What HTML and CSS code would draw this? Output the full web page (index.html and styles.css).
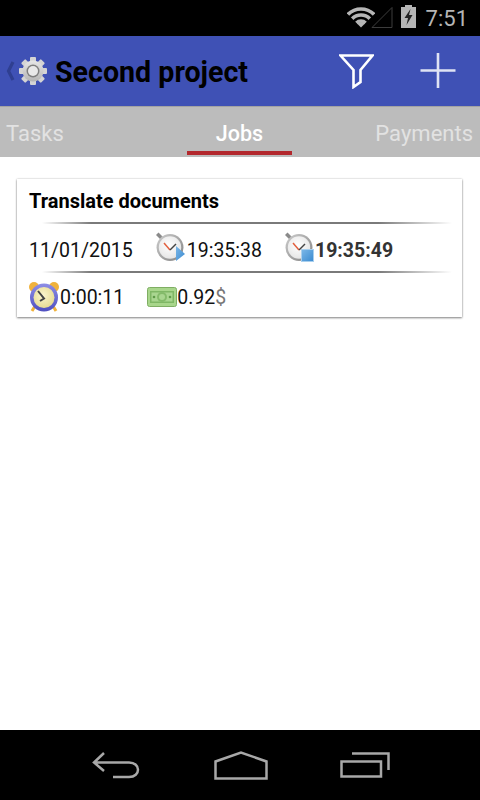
FILE: index.html
```html
<!DOCTYPE html>
<html lang="en">
<head>
<meta charset="utf-8">
<title>Second project</title>
<link rel="stylesheet" href="styles.css">
</head>
<body>
<svg class="defs" width="0" height="0" aria-hidden="true">
  <defs>
    <clipPath id="wedge"><path d="M14 20.500L-1 5.500V-1H29V5.500Z"/></clipPath>
    <radialGradient id="watchFace" cx="45%" cy="40%" r="65%"><stop offset="0" stop-color="#ffffff"/><stop offset="1" stop-color="#e4e4e4"/></radialGradient>
    <linearGradient id="watchRim" x1="0" y1="0" x2="1" y2="1"><stop offset="0" stop-color="#cfcfcf"/><stop offset="0.5" stop-color="#a6a6a6"/><stop offset="1" stop-color="#858585"/></linearGradient>
    <linearGradient id="blueBadge" x1="0" y1="0" x2="1" y2="1"><stop offset="0" stop-color="#7cb8e8"/><stop offset="1" stop-color="#3a8ad0"/></linearGradient>
    <radialGradient id="alarmFace" cx="45%" cy="40%" r="65%"><stop offset="0" stop-color="#fbf6cf"/><stop offset="1" stop-color="#e6d98f"/></radialGradient>
    <linearGradient id="alarmRim" x1="0" y1="0" x2="0" y2="1"><stop offset="0" stop-color="#8e8ee6"/><stop offset="1" stop-color="#4f4fc0"/></linearGradient>
    <linearGradient id="gearFill" x1="0" y1="0" x2="0" y2="1"><stop offset="0" stop-color="#e6e6e6"/><stop offset="1" stop-color="#b4b4b4"/></linearGradient>
  </defs>
</svg>
<div class="phone">
  <header class="status">
    <svg class="st-wifi" width="28" height="21" viewBox="0 0 28 21"><g clip-path="url(#wedge)" fill="none" stroke="#b5b5b5" stroke-width="3.600"><circle cx="14" cy="20.500" r="18.500"/><circle cx="14" cy="20.500" r="12.500"/><circle cx="14" cy="20.500" r="6.500"/></g><path d="M14 20.500L10 16.500A6 6 0 0 1 18 16.500Z" fill="#b5b5b5"/></svg>
    <svg class="st-signal" width="22" height="22" viewBox="0 0 22 22"><path d="M1 21.500L21 1.500V21.500Z" fill="none" stroke="#3c3c3c" stroke-width="1"/></svg>
    <svg class="st-batt" width="15" height="23" viewBox="0 0 15 23"><path d="M4 0H11V2H15V23H0V2H4Z" fill="#b5b5b5"/><path d="M9.500 4L3.500 13H7L5.500 20L11.500 10H8Z" fill="#222"/></svg>
    <span class="clock">7:51</span>
  </header>
  <div class="appbar">
    <svg class="back" width="9" height="20" viewBox="0 0 9 20"><path d="M7 1L2.500 10L7 19" fill="none" stroke="#2f3f91" stroke-width="3.200"/></svg>
    <svg class="gear" width="28" height="28" viewBox="0 0 28 28">
      <g fill="#d4d4d4">
        <rect x="11" y="0" width="6" height="28" rx="1"/>
        <rect x="11" y="0" width="6" height="28" rx="1" transform="rotate(45 14 14)"/>
        <rect x="11" y="0" width="6" height="28" rx="1" transform="rotate(90 14 14)"/>
        <rect x="11" y="0" width="6" height="28" rx="1" transform="rotate(135 14 14)"/>
      </g>
      <circle cx="14" cy="14" r="10.500" fill="url(#gearFill)"/>
      <circle cx="14" cy="14" r="6.500" fill="#7f7f7f"/>
      <circle cx="14" cy="14" r="5" fill="#e8e8e8"/>
    </svg>
    <h1 class="title">Second project</h1>
    <svg class="filter" width="35" height="35" viewBox="0 0 35 35"><path d="M1.500 1.500H33.500L21.500 16V28L14.500 33V16Z" fill="none" stroke="#fff" stroke-width="2.600"/></svg>
    <svg class="plus" width="36" height="36" viewBox="0 0 36 36"><path d="M18 0V35M0.500 17.500H35.500" stroke="#dfe3f4" stroke-width="2.600"/></svg>
  </div>
  <nav class="tabs">
    <span class="tab tab-left">Tasks</span>
    <span class="tab tab-active">Jobs</span>
    <span class="tab tab-right">Payments</span>
  </nav>
  <main class="content">
    <article class="card">
      <h2 class="job">Translate documents</h2>
      <div class="rule"></div>
      <div class="row row-times">
        <span class="date">11/01/2015</span>
        <span class="item item-start">
          <svg class="ic" width="32" height="30" viewBox="0 0 32 30"><path d="M3.500 0.500L8 5L5.500 7.500L1 3Z" fill="#8a8a8a"/><circle cx="15" cy="15.500" r="13.500" fill="url(#watchRim)"/><circle cx="15" cy="15.500" r="11.200" fill="url(#watchFace)"/><path d="M15 18L9 11" stroke="#e2603f" stroke-width="1.500"/><path d="M15 18L21 12" stroke="#444" stroke-width="1.500"/><path d="M21 14L30 22L21 29Z" fill="url(#blueBadge)"/></svg>19:35:38
        </span>
        <span class="item item-stop">
          <svg class="ic" width="31" height="30" viewBox="0 0 31 30"><path d="M3.500 0.500L8 5L5.500 7.500L1 3Z" fill="#8a8a8a"/><circle cx="15" cy="15.500" r="13.500" fill="url(#watchRim)"/><circle cx="15" cy="15.500" r="11.200" fill="url(#watchFace)"/><path d="M15 18L9 11" stroke="#e2603f" stroke-width="1.500"/><path d="M15 18L21 12" stroke="#444" stroke-width="1.500"/><rect x="17.500" y="17.500" width="12" height="12" fill="url(#blueBadge)" stroke="#a8cfee"/></svg><b>19:35:49</b>
        </span>
      </div>
      <div class="rule"></div>
      <div class="row row-totals">
        <span class="item">
          <svg class="ic ic-alarm" width="30" height="30" viewBox="0 0 30 30"><circle cx="5" cy="5" r="5" fill="#f0b23c"/><circle cx="25" cy="5" r="5" fill="#f0b23c"/><path d="M6 24L3 29M24 24L27 29" stroke="#f0b23c" stroke-width="3"/><circle cx="15" cy="15.500" r="14" fill="url(#alarmRim)"/><circle cx="15" cy="15.500" r="10.500" fill="url(#alarmFace)"/><path d="M9 9L15 16.500L11 19" fill="none" stroke="#444" stroke-width="2"/></svg>0:00:11
        </span>
        <span class="item item-money">
          <svg class="ic" width="30" height="20" viewBox="0 0 30 20"><rect x="0.500" y="0.500" width="29" height="19" rx="2" fill="#a8d68b" stroke="#7fae63"/><rect x="3" y="4" width="24" height="12" fill="#7fb765"/><rect x="4.500" y="5.500" width="21" height="9" fill="#a9d690"/><circle cx="15" cy="10" r="5" fill="#84bb6a"/><circle cx="15" cy="10" r="3" fill="#a9d690"/><circle cx="7" cy="10" r="1.300" fill="#5f9a48"/><circle cx="23" cy="10" r="1.300" fill="#5f9a48"/></svg>0.92<span class="cur">$</span>
        </span>
      </div>
    </article>
  </main>
  <footer class="nav">
    <svg width="50" height="28" viewBox="0 0 50 28"><path d="M12 2L2 11.500L12 20M2 11.500H37C49 11.500 49 26 37 26H21" fill="none" stroke="#a8a8a8" stroke-width="2.500"/></svg>
    <svg width="54" height="29" viewBox="0 0 54 29"><path d="M1.500 27.500V10.500L27 1.500L52.500 10.500V27.500Z" fill="none" stroke="#a8a8a8" stroke-width="2.500"/></svg>
    <svg width="50" height="26" viewBox="0 0 50 26"><path d="M12 1.500H48.500V18M1.500 9.500H41V24.500H1.500Z" fill="none" stroke="#a8a8a8" stroke-width="2.500"/></svg>
  </footer>
</div>
</body>
</html>
```

FILE: styles.css
```css
* { box-sizing: border-box; }
html, body { margin: 0; padding: 0; }
body { font-family: Roboto, "Liberation Sans", sans-serif; background: #fff; }
.defs { display: block; height: 0; }
.phone { width: 480px; height: 800px; display: flex; flex-direction: column; overflow: hidden; }

.status { height: 36px; background: #000; display: flex; align-items: center; justify-content: flex-end; padding-right: 12px; flex: none; }
.st-wifi { margin-right: -4px; margin-top: -1px; }
.st-signal { margin-right: 8px; margin-top: -2px; }
.st-batt { margin-right: 10px; margin-top: -3px; }
.clock { color: #b5b5b5; font-size: 22px; line-height: 36px; margin-top: 2px; }

.appbar { height: 70px; background: #3f51b5; display: flex; align-items: center; padding-left: 6px; flex: none; }
.back { margin-right: 4px; }
.gear { margin-right: 8px; margin-top: -1px; }
.title { margin: 0; font-size: 28.6px; font-weight: 700; color: #000; flex: 1; padding-top: 1px; }
.filter { margin-right: 46px; }
.plus { margin-right: 24px; }

.tabs { height: 51px; background: #bcbcbc; border-top: 1px solid #a3a3a3; display: grid; grid-template-columns: 1fr 105px 1fr; padding: 0 7px 0 6px; flex: none; }
.tab { font-size: 22px; color: #e2e2e2; line-height: 54px; }
.tab-right { text-align: right; }
.tab-active { color: #fff; font-size: 21.5px; font-weight: 500; text-align: center; height: 48px; border-bottom: 4px solid #b3282d; line-height: 53px; }

.content { flex: 1; background: #fff; padding: 22px 17px 0; }
.card { height: 138px; width: 445px; background: #fff; box-shadow: 0 1px 2px rgba(0,0,0,0.45), 0 0 2px rgba(0,0,0,0.2); padding: 0 12px; }
.job { margin: 0; font-size: 20px; font-weight: 700; color: #000; line-height: 24px; padding-top: 10px; height: 43px; }
.rule { height: 2px; margin: 0 0 0 13px; width: 410px; background: linear-gradient(to right, transparent, #7a7a7a 12%, #7a7a7a 82%, transparent); }
.row { display: flex; align-items: center; font-size: 19.5px; color: #111; white-space: nowrap; }
.row-times { height: 47px; padding-top: 5px; }
.row-times .ic { margin-top: -7px; }
.row-totals { height: 47px; padding-top: 2px; }
.row-totals .ic { margin-top: -2px; }
.ic-alarm { margin-right: 1px; }
.item { display: flex; align-items: center; }
.item-start { margin-left: 22px; }
.item-stop { margin-left: 22px; color: #333; }
.item-stop b { font-weight: 700; }
.item-money { margin-left: 23px; }
.ic { flex: none; }
.cur { color: #777; }

.nav { height: 70px; background: #000; display: flex; align-items: center; gap: 72px; padding: 0 0 0 92px; flex: none; }
```
